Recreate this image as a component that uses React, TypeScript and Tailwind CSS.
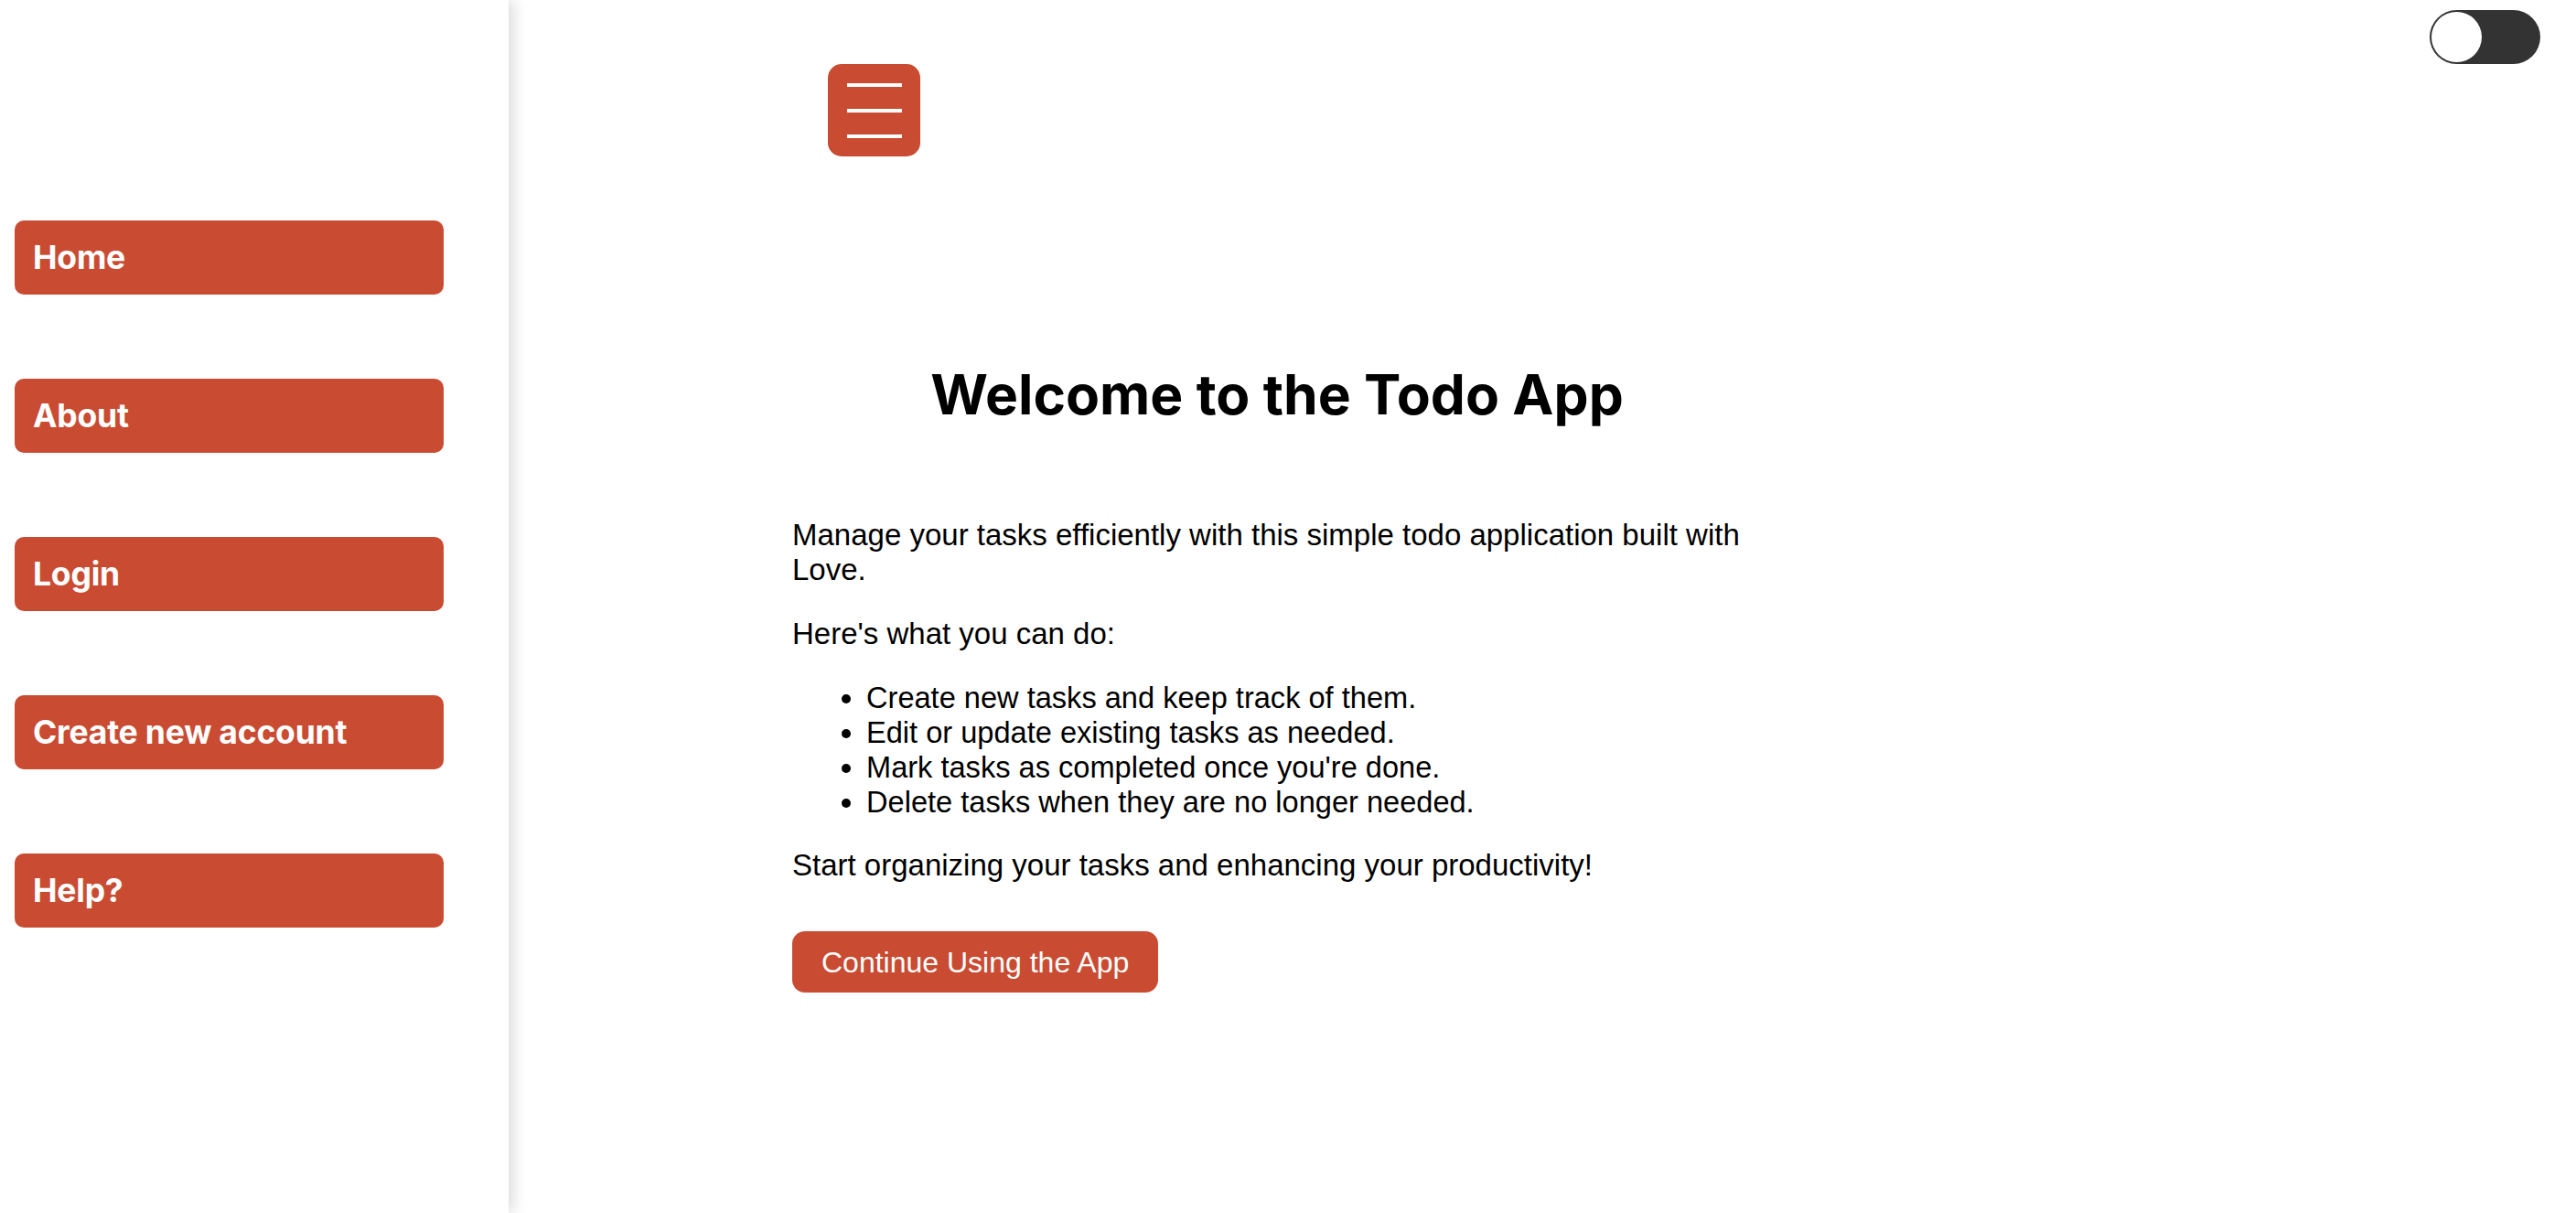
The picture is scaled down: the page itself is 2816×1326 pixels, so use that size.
const navItems = ["Home", "About", "Login", "Create new account", "Help?"];

const tasks = [
  "Create new tasks and keep track of them.",
  "Edit or update existing tasks as needed.",
  "Mark tasks as completed once you're done.",
  "Delete tasks when they are no longer needed.",
];

const Sidebar: React.FC = () => {
  return (
    <aside className="relative z-10 w-[556px] shrink-0 min-h-screen bg-white shadow-[6px_0_14px_rgba(0,0,0,0.13)]">
      <nav className="flex flex-col gap-[92px] pt-[241px] px-[16px]">
        {navItems.map((item) => (
          <a
            key={item}
            href="#"
            className="flex items-center w-[469px] h-[81px] pl-[20px] rounded-[10px] bg-[#c94b32] text-white text-[35.5px] font-bold font-['Inter',sans-serif] tracking-[-0.2px]"
          >
            {item}
          </a>
        ))}
      </nav>
    </aside>
  );
};

const App: React.FC = () => {
  return (
    <div className="flex min-h-screen bg-white text-black">
      <Sidebar />

      <main className="relative flex-1">
        {/* Theme toggle */}
        <button className="absolute top-[11px] right-[39px] flex items-center w-[121px] h-[59px] p-[2px] rounded-full bg-[#333333]">
          <span className="block w-[55px] h-[55px] rounded-full bg-white" />
        </button>

        {/* Menu button */}
        <div className="pt-[70px] pl-[349px]">
          <button className="flex flex-col items-center justify-center gap-[24px] w-[101px] h-[101px] rounded-[15px] bg-[#c94b32]">
            <span className="block w-[60px] h-[4px] bg-white" />
            <span className="block w-[60px] h-[4px] bg-white" />
            <span className="block w-[60px] h-[4px] bg-white" />
          </button>
        </div>

        {/* Welcome content */}
        <section className="ml-[310px] w-[1060px] font-['Liberation_Sans',Arial,sans-serif] text-[33px] leading-[38px]">
          <h1 className="mt-[225px] h-[70px] text-center text-[60.5px] leading-[70px] font-bold font-['Inter',sans-serif]">
            Welcome to the Todo App
          </h1>

          <p className="mt-[100px]">
            Manage your tasks efficiently with this simple todo application built with Love.
          </p>
          <p className="mt-[32px]">Here's what you can do:</p>

          <ul className="mt-[32px] list-disc pl-[81px] text-[32.6px]">
            {tasks.map((t) => (
              <li key={t}>{t}</li>
            ))}
          </ul>

          <p className="mt-[31px]">Start organizing your tasks and enhancing your productivity!</p>

          <button className="mt-[53px] h-[67px] px-[32px] rounded-[14px] bg-[#c94b32] text-white text-[32px]">
            Continue Using the App
          </button>
        </section>
      </main>
    </div>
  );
};

export default App;
